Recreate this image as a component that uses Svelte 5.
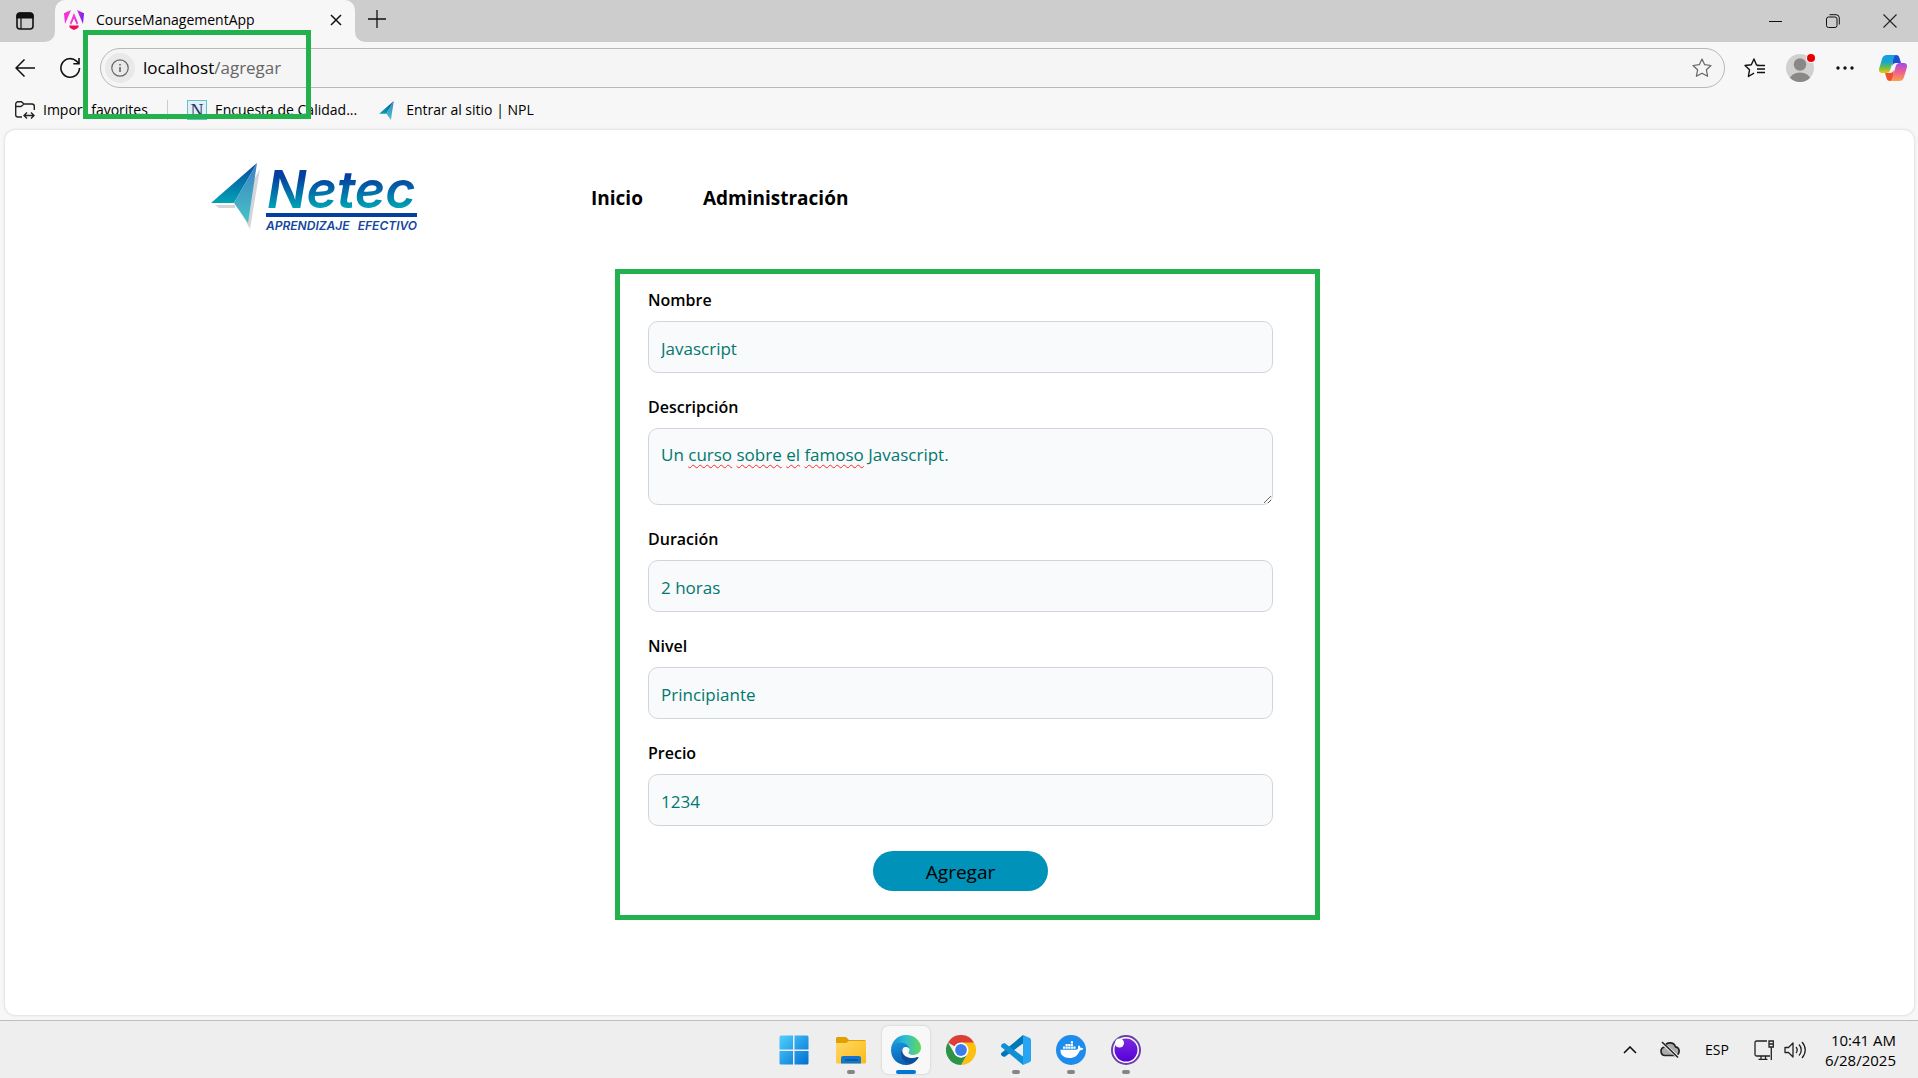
<script lang="ts">
  let nombre = $state('Javascript');
  let descripcion = $state('Un curso sobre el famoso Javascript.');
  let duracion = $state('2 horas');
  let nivel = $state('Principiante');
  let precio = $state('1234');
  const flagged = ['curso', 'sobre', 'el', 'famoso'];
  let words = $derived(descripcion.split(' '));
</script>

{#snippet plane(id: string)}
  <linearGradient id="{id}a" x1="0" y1="0" x2="0" y2="1">
    <stop offset="0" stop-color="#0a47a0" /><stop offset="1" stop-color="#00a3b4" />
  </linearGradient>
  <linearGradient id="{id}b" x1="0" y1="0" x2="0" y2="1">
    <stop offset="0" stop-color="#3f7fc0" /><stop offset="1" stop-color="#45c4c8" />
  </linearGradient>
  <path d="M46 0 0 40h23z" fill="url(#{id}a)" />
  <path d="M46 0 23 40l14 20z" fill="url(#{id}b)" />
{/snippet}

<div class="screen">
  <header class="browser">
    <div class="tabs">
      <div class="tabs-start">
        <button class="plain" aria-label="Tab actions">
          <svg width="20" height="20" viewBox="0 0 20 20"><rect x="2" y="2" width="16" height="16" rx="3" fill="none" stroke="#111" stroke-width="1.6" /><path d="M2 5a3 3 0 0 1 3-3h10a3 3 0 0 1 3 3v2H2zM6 7v11" fill="#111" stroke="#111" stroke-width="1.2" /></svg>
        </button>
      </div>
      <div class="tab-cell">
        <div class="tab">
          <svg class="favicon" width="20" height="20" viewBox="0 0 20 20">
            <defs><linearGradient id="ng"><stop offset="0" stop-color="#f52bd0" /><stop offset=".5" stop-color="#f63bd2" /><stop offset="1" stop-color="#7618f5" /></linearGradient></defs>
            <path d="M7 0 0 3.3 1 14zM13 0l7 3.3L19 14zM10 3 6 13l1 2 3-6.500 3 6.500 1-2z" fill="url(#ng)" />
            <path d="M5 15.500h10l-1 2.500-4 2-4-2z" fill="#f20b5d" />
          </svg>
          <span class="tab-title">CourseManagementApp</span>
          <button class="plain" aria-label="Close tab"><svg width="12" height="12" viewBox="0 0 12 12"><path d="m1 1 10 10M11 1 1 11" stroke="#111" stroke-width="1.500" /></svg></button>
        </div>
      </div>
      <div class="tabs-rest">
        <button class="plain new-tab" aria-label="New tab"><svg width="18" height="18" viewBox="0 0 18 18"><path d="M9 0v18M0 9h18" stroke="#111" stroke-width="1.300" /></svg></button>
        <div class="window-controls">
          <button class="plain" aria-label="Minimize"><svg width="13" height="13" viewBox="0 0 13 13"><path d="M0 6.500h13" stroke="#111" /></svg></button>
          <button class="plain" aria-label="Restore"><svg width="14" height="14" viewBox="0 0 14 14" fill="none" stroke="#111"><rect x=".5" y="3" width="10.500" height="10.500" rx="2" /><path d="M3.500.7H10a3.300 3.300 0 0 1 3.300 3.300v6.500" /></svg></button>
          <button class="plain" aria-label="Close"><svg width="14" height="14" viewBox="0 0 14 14"><path d="m.5.5 13 13M13.500.5l-13 13" stroke="#222" stroke-width="1.100" /></svg></button>
        </div>
      </div>
    </div>

    <div class="toolbar">
      <button class="plain back" aria-label="Back"><svg width="20" height="18" viewBox="0 0 20 18" fill="none" stroke="#111" stroke-width="1.500"><path d="M20 9H1M9.500.5 1 9l8.500 8.500" /></svg></button>
      <button class="plain reload" aria-label="Refresh"><svg width="22" height="22" viewBox="0 0 22 22" fill="none" stroke="#111" stroke-width="1.600"><path d="M20.500 11a9.300 9.300 0 1 1-3-6.900L20 6.500" /><path d="M20 1v5.700h-5.700" /></svg></button>
      <div class="address">
        <button class="plain info" aria-label="Site information"><svg width="18" height="18" viewBox="0 0 18 18" fill="none" stroke="#666" stroke-width="1.200"><circle cx="9" cy="9" r="8.200" /><path d="M9 8v5M9 5v1.500" stroke-width="1.600" /></svg></button>
        <span class="url">localhost<span>/agregar</span></span>
        <button class="plain" aria-label="Add to favorites"><svg width="20" height="20" viewBox="0 0 20 20"><path d="m10 1 2.700 5.700 6.300.8-4.600 4.300 1.200 6.400L10 15.200l-5.600 3 1.200-6.400L1 7.500l6.300-.8z" fill="none" stroke="#666" stroke-width="1.200" stroke-linejoin="round" /></svg></button>
      </div>
      <button class="plain tool" aria-label="Favorites"><svg width="21" height="20" viewBox="0 0 21 20" fill="none" stroke="#111" stroke-width="1.400" stroke-linejoin="round"><path d="M15.500 7.500 12.500 7 10 1 7.300 6.700 1 7.500l4.500 4.300-1.100 6.700 5.600-3.300M13 7.500h8M13 11h8M13 14.500h8" /></svg></button>
      <button class="plain tool" aria-label="Profile"><svg width="30" height="30" viewBox="0 0 30 30"><defs><clipPath id="pc"><circle cx="15" cy="15" r="14" /></clipPath></defs><circle cx="15" cy="15" r="14" fill="#d2d0ce" /><g clip-path="url(#pc)" fill="#8a8886"><circle cx="15" cy="11.500" r="6.200" /><ellipse cx="15" cy="26" rx="10" ry="6.500" /></g><circle cx="26" cy="5" r="5" fill="#f7f7f7" /><circle cx="26" cy="5" r="4" fill="#e60000" /></svg></button>
      <button class="plain tool" aria-label="Settings and more"><svg width="18" height="4" viewBox="0 0 18 4" fill="#111"><circle cx="2" cy="2" r="1.700" /><circle cx="9" cy="2" r="1.700" /><circle cx="16" cy="2" r="1.700" /></svg></button>
      <button class="plain copilot" aria-label="Copilot">
        <svg width="28" height="26" viewBox="0 0 28 26">
          <defs>
            <linearGradient id="c1" x1="0" y1="0" x2="0" y2="1"><stop offset="0" stop-color="#149bf0" /><stop offset=".4" stop-color="#1aa7c8" /><stop offset=".7" stop-color="#6bbf4b" /><stop offset="1" stop-color="#f5c400" /></linearGradient>
            <linearGradient id="c2" x1="0" y1="0" x2="0" y2="1"><stop offset="0" stop-color="#a24be8" /><stop offset=".5" stop-color="#ee5f93" /><stop offset="1" stop-color="#ff9f4a" /></linearGradient>
          </defs>
          <path d="M13 0h4c2 0 3 1 3.500 3L22 8h-5c-2 0-3 1-3.500 3z" fill="#1c4fd0" />
          <path d="M15 26h-4c-2 0-3-1-3.500-3L6 18h5c2 0 3-1 3.500-3z" fill="#f0502c" />
          <path d="M8 0h10c-2 0-2.800 1.500-3.500 4l-3 10c-.8 3-2 4-4.500 4H3c-3 0-3.500-2.500-2.700-5L3 4C4 1 5.500 0 8 0z" fill="url(#c1)" />
          <path d="M20 26H10c2 0 2.800-1.500 3.500-4l3-10c.8-3 2-4 4.500-4h4c3 0 3.500 2.500 2.700 5L25 22c-1 3-2.500 4-5 4z" fill="url(#c2)" />
        </svg>
      </button>
    </div>

    <nav class="bookmarks" aria-label="Favorites bar">
      <a href="#import"><svg width="20" height="20" viewBox="0 0 20 20" fill="none" stroke="#222" stroke-width="1.400"><path d="M7 17H3a2.300 2.300 0 0 1-2.300-2.300V4A2.300 2.300 0 0 1 3 1.700h3.500L9 4h8a2.300 2.300 0 0 1 2.300 2.300V10M1 6.500h5L9 4M9 15.500h10M12 12.500l-3 3 3 3M16 12.500l3 3-3 3" /></svg>Import favorites</a>
      <span class="divider"></span>
      <a href="#encuesta"><span class="n-icon">N</span>Encuesta de Calidad...</a>
      <a href="#npl" class="npl"><svg width="15" height="19" viewBox="0 0 46 60">{@render plane('s')}</svg>Entrar al sitio | NPL</a>
    </nav>
    <div class="mark url-mark"></div>
  </header>

  <main class="page">
    <div class="site-header">
      <a href="#inicio" class="brand" aria-label="Netec">
        <svg width="210" height="82" viewBox="0 -10 210 82">
          <defs><linearGradient id="nt" x1="0" y1="0" x2="0" y2="1"><stop offset=".3" stop-color="#053fa0" /><stop offset=".8" stop-color="#00a5b5" /></linearGradient></defs>
          <g fill="#d3d5d8"><path d="M49 6 27 44l12 22zM4 42h20v3H8z" /></g>
          {@render plane('l')}
          <text x="56" y="45" class="wordmark" fill="url(#nt)">Netec</text>
          <rect x="55" y="50" width="151" height="4" fill="#053fa0" />
          <text x="55" y="67" class="tagline">APRENDIZAJE</text>
          <text x="206" y="67" class="tagline" text-anchor="end">EFECTIVO</text>
        </svg>
      </a>
      <nav class="site-nav" aria-label="Principal"><a href="#inicio">Inicio</a><a href="#admin">Administración</a></nav>
    </div>

    <form class="course" onsubmit={(e) => e.preventDefault()}>
      <div class="field"><label for="nombre">Nombre</label><input id="nombre" bind:value={nombre} /></div>
      <div class="field">
        <label for="descripcion">Descripción</label>
        <div class="area">
          <textarea id="descripcion" rows="2" spellcheck="false" bind:value={descripcion}></textarea>
          <div class="spelling" aria-hidden="true">{#each words as word, i}{i ? ' ' : ''}<span class:wrong={flagged.includes(word)}>{word}</span>{/each}</div>
        </div>
      </div>
      <div class="field"><label for="duracion">Duración</label><input id="duracion" bind:value={duracion} /></div>
      <div class="field"><label for="nivel">Nivel</label><input id="nivel" bind:value={nivel} /></div>
      <div class="field"><label for="precio">Precio</label><input id="precio" bind:value={precio} /></div>
      <button class="submit" type="submit">Agregar</button>
      <div class="mark form-mark"></div>
    </form>
  </main>

  <footer class="taskbar">
    <div></div>
    <div class="apps">
      <button class="app start" aria-label="Start">
        <svg width="30" height="30" viewBox="0 0 30 30"><defs><linearGradient id="w" x1="0" y1="0" x2="1" y2="1"><stop offset="0" stop-color="#4fd0ff" /><stop offset="1" stop-color="#006fd0" /></linearGradient></defs><path d="M2 .5h12v14H.5V2A1.500 1.500 0 0 1 2 .5zM15.500.5H28A1.500 1.500 0 0 1 29.500 2v12.500h-14zM.5 16H14v13.500H2A1.500 1.500 0 0 1 .5 28zM15.500 16h14v12a1.500 1.500 0 0 1-1.500 1.500H15.500z" fill="url(#w)" /></svg>
      </button>
      <button class="app open" aria-label="File Explorer">
        <svg width="30" height="30" viewBox="0 0 30 30"><defs><linearGradient id="f" x1="0" y1="0" x2="1" y2="1"><stop offset="0" stop-color="#ffd967" /><stop offset="1" stop-color="#fcb917" /></linearGradient></defs><path d="M0 3.500A1.500 1.500 0 0 1 1.500 2H10l3 3h15.500A1.500 1.500 0 0 1 30 6.500V12H0z" fill="#dfa000" /><path d="M0 8h10l3-2h17v21a1.500 1.500 0 0 1-1.500 1.500h-27A1.500 1.500 0 0 1 0 27z" fill="url(#f)" /><path d="M5 28.500V23a2 2 0 0 1 2-2h16a2 2 0 0 1 2 2v5.500z" fill="#1277cc" /><path d="M9 25h13" stroke="#06498c" stroke-width="1.200" /></svg>
      </button>
      <button class="app open active" aria-label="Microsoft Edge">
        <svg width="30" height="30" viewBox="0 0 30 30">
          <defs>
            <linearGradient id="e1"><stop offset="0" stop-color="#158bd3" /><stop offset=".45" stop-color="#2bbcd5" /><stop offset="1" stop-color="#63d957" /></linearGradient>
            <linearGradient id="e2" x1="0" y1="0" x2=".3" y2="1"><stop offset="0" stop-color="#1896df" /><stop offset="1" stop-color="#0a61b5" /></linearGradient>
          </defs>
          <path d="M0 14C.8 6 7 0 15 0c9 0 15 6.500 15 12.500 0 4.700-3.600 7.500-7.800 7.500-3 0-4.700-1-4.700-2.200 0-.8 1-1.300 1-3.300 0-2.500-2.700-5.500-7.500-5.500C5.500 9 1.500 11.500 0 14z" fill="url(#e1)" />
          <path d="M0 15c.3-4.500 4.500-7.500 9-7.500 5.500 0 9 3.300 9.500 6.500-1-1.700-2.800-2.300-4.500-2-4 1-5 6-3 10 1.800 4 5.500 6.500 9 7-1.500.7-3.500 1-5 1C6.500 30 0 23.500 0 15z" fill="url(#e2)" />
          <path d="M12.500 12.500C8 15.500 9 27 19.500 29.300c3.700-1.300 6-3.300 7.900-6.300.4-.7-.2-1.300-1-1-7 3-15.400-.7-15.100-6.500.1-1.200.5-2.200 1.200-3z" fill="#0e4d98" />
        </svg>
      </button>
      <button class="app" aria-label="Google Chrome">
        <svg width="30" height="30" viewBox="0 0 30 30"><path d="M15 15 2 7.500A15 15 0 0 1 28 7.500z" fill="#dc3f34" /><path d="M15 7.500h13A15 15 0 0 1 15 30l6.500-11.300z" fill="#fdc010" /><path d="M2 7.500 8.500 18.700c1.500 2.500 4 3.800 6.500 3.800 2 0 4.500-1 6-3L15 30A15 15 0 0 1 2 7.500z" fill="#2b9447" /><circle cx="15" cy="15" r="7.500" fill="#fff" /><circle cx="15" cy="15" r="5.900" fill="#3b7ded" /></svg>
      </button>
      <button class="app open" aria-label="Visual Studio Code">
        <svg width="30" height="30" viewBox="0 0 30 30"><path d="M22 0v8.500L3.500 22 1 21l-1-1.500v-1.300z" fill="#0077b9" /><path d="M22 30v-8.500L3.500 8 1 9l-1 1.500v1.300z" fill="#118fd6" /><path d="m22 0 7 3 1 1.500v21L29 27l-7 3z" fill="#27a5f2" /></svg>
      </button>
      <button class="app open" aria-label="Docker">
        <svg width="30" height="30" viewBox="0 0 30 30"><circle cx="15" cy="15" r="15" fill="#1d8ced" /><path d="M4.500 14.800H20c1.500 0 2.200-.7 2-2.200 0-1 .3-1.800.8-2.300 1 .6 1.500 1.500 1.500 2.400 1-.2 2.200 0 3 .6-.5 1.500-1.800 2.200-3.500 2.200C22 20.500 18.500 23 13.500 23 8 23 4 20 4.500 14.800z" fill="#fff" /><path d="M7 12.700h12.500M9.500 10h7.500M14.800 7.300h2.400" stroke="#fff" stroke-width="2.200" stroke-dasharray="2.200 .4" /></svg>
      </button>
      <button class="app open" aria-label="Insomnia">
        <svg width="30" height="30" viewBox="0 0 30 30"><defs><linearGradient id="i" x1="0" y1="0" x2="0" y2="1"><stop offset="0" stop-color="#7a28e0" /><stop offset="1" stop-color="#5500d8" /></linearGradient></defs><circle cx="15" cy="15" r="14" fill="#fff" stroke="#6940a5" stroke-width="2" /><circle cx="15" cy="15" r="11.500" fill="url(#i)" /><circle cx="8.500" cy="8" r="4.500" fill="#fff" /></svg>
      </button>
    </div>
    <div class="tray">
      <button class="plain" aria-label="Show hidden icons"><svg width="14" height="8" viewBox="0 0 14 8"><path d="m1 7 6-6 6 6" fill="none" stroke="#111" stroke-width="1.600" /></svg></button>
      <button class="plain cloud" aria-label="OneDrive"><svg width="20" height="18" viewBox="0 0 20 18"><path d="M5 14.500a4.300 4.300 0 0 1-.5-8.500 5.800 5.800 0 0 1 11-.2 4.400 4.400 0 0 1-.3 8.700z" fill="#aaa" stroke="#222" stroke-width="1.700" /><path d="m2 2 16 14" stroke="#eee" stroke-width="3" /><path d="m2 1 16 15.500" stroke="#222" stroke-width="1.600" /></svg></button>
      <button class="plain lang">ESP</button>
      <button class="plain system" aria-label="Network and volume">
        <svg width="20" height="20" viewBox="0 0 20 20" fill="none" stroke="#222" stroke-width="1.300"><path d="M13 1H2.500A1.500 1.500 0 0 0 1 2.500v12A1.500 1.500 0 0 0 2.500 16H16M4.500 19.300h9M7 16v3M11.500 16v3M15 1h4.300v6H15zM15 4h4M17.300 7v13" /></svg>
        <svg width="22" height="18" viewBox="0 0 22 18" fill="none" stroke="#222" stroke-width="1.300" stroke-linejoin="round"><path d="M1 6.500h3.500L9 2v14l-4.500-4.500H1zM12 6c1.500 1.800 1.500 4.200 0 6M15 3.500c3 3.200 3 7.800 0 11M18 1c4.300 4.700 4.300 11.300 0 16" /></svg>
      </button>
      <div class="clock"><time>10:41 AM</time><time>6/28/2025</time></div>
    </div>
  </footer>
</div>

<style>
  :global(body) { margin: 0; }
  * { box-sizing: border-box; }
  .screen {
    min-height: 100vh;
    display: flex;
    flex-direction: column;
    background: #f7f7f7;
    color: #000;
    font-family: "Open Sans", "Noto Sans", sans-serif;
    font-size: 14px;
  }
  a { color: inherit; text-decoration: none; }
  button, input, textarea { font: inherit; color: inherit; }
  .plain {
    border: 0;
    padding: 0;
    background: none;
    display: flex;
    align-items: center;
    justify-content: center;
  }
  .browser { position: relative; }

  .tabs { display: flex; height: 42px; }
  .tabs-start, .tabs-rest { background: #cdcdcd; display: flex; align-items: center; }
  .tabs-start { width: 55px; justify-content: center; padding-right: 5px; border-bottom-right-radius: 10px; }
  .tab-cell { width: 300px; background: linear-gradient(#cdcdcd 50%, #f7f7f7 50%); }
  .tab {
    height: 42px;
    display: flex;
    align-items: center;
    padding: 0 13px 3px 9px;
    background: #f7f7f7;
    border-radius: 10px 10px 0 0;
  }
  .tab-title { flex: 1; margin-left: 12px; }
  .tabs-rest { flex: 1; padding-left: 13px; border-bottom-left-radius: 10px; justify-content: space-between; }
  .new-tab { padding-bottom: 4px; }
  .window-controls { display: flex; }
  .window-controls button { width: 57px; height: 42px; }

  .toolbar { display: flex; align-items: center; height: 52px; }
  .back { width: 50px; }
  .reload { width: 40px; margin-right: 10px; }
  .address {
    flex: 1;
    height: 40px;
    display: flex;
    align-items: center;
    padding: 0 12px 0 4px;
    margin-right: 7px;
    border: 1px solid #b8b8b8;
    border-radius: 20px;
    background: #f5f5f5;
  }
  .info { width: 30px; height: 30px; border-radius: 50%; background: #e9e9e9; }
  .url { flex: 1; margin-left: 8px; padding-bottom: 2px; font-size: 17px; }
  .url span { color: #666; }
  .tool { width: 45px; }
  .copilot { width: 51px; }

  .bookmarks { display: flex; align-items: center; height: 36px; padding: 0 15px 4px; }
  .bookmarks a { display: flex; align-items: center; gap: 8px; line-height: 18px; }
  .divider { width: 1px; height: 20px; background: #ccc; margin: 0 19px; }
  .n-icon {
    width: 20px;
    height: 20px;
    border: 1px solid #5fc3cf;
    background: #e2eff4;
    color: #25316f;
    font: 18px/20px "Liberation Serif", serif;
    text-align: center;
  }
  .bookmarks .npl { margin-left: 22px; gap: 12px; }

  .mark { position: absolute; border: 5px solid #22b14c; pointer-events: none; }
  .url-mark { left: 83px; top: 30px; width: 228px; height: 89px; }
  .form-mark { inset: -18px -47px -29px -33px; }

  .page {
    flex: 1;
    margin: 0 4px 5px 5px;
    padding-left: 2px;
    border-radius: 10px;
    background: #fff;
    box-shadow: 0 0 3px #c8c8c8;
  }
  .site-header {
    display: flex;
    align-items: center;
    gap: 170px;
    padding: 23px 204px 0;
  }
  .brand { display: flex; }
  .wordmark { font: italic 600 52px Inter, sans-serif; }
  .tagline { font: italic 600 12px Inter, sans-serif; fill: #1546a0; }
  .site-nav { display: flex; gap: 60px; font-size: 19px; font-weight: 700; padding-top: 7px; }

  .course {
    position: relative;
    max-width: 625px;
    margin: 52px auto 0;
    display: flex;
    flex-direction: column;
    gap: 21px;
  }
  .field { display: flex; flex-direction: column; gap: 8px; }
  label { font-size: 16px; line-height: 26px; font-weight: 600; }
  input, textarea {
    display: block;
    width: 100%;
    padding: 12px;
    border: 1px solid #d1d5db;
    border-radius: 10px;
    background: #f9fafb;
    color: #00786f;
    font-size: 17px;
    line-height: 26px;
  }
  input { height: 52px; padding: 14px 12px 12px; }
  textarea { height: 77px; padding-top: 13px; resize: both; overflow: hidden; outline: none; }
  .area { position: relative; }
  .spelling {
    position: absolute;
    inset: 0;
    padding: 14px 13px;
    pointer-events: none;
    color: transparent;
    font-size: 17px;
    line-height: 26px;
  }
  .wrong { text-decoration: underline wavy 1px #ff2a2a; text-decoration-skip-ink: none; text-underline-offset: 3px; }
  .submit {
    align-self: center;
    width: 175px;
    height: 40px;
    margin-top: 4px;
    padding: 2px 0 0;
    border: 0;
    border-radius: 20px;
    background: #0092b8;
    font-size: 19px;
  }

  .taskbar {
    display: grid;
    grid-template-columns: 1fr auto 1fr;
    align-items: center;
    height: 58px;
    border-top: 1px solid #bdbdbd;
    background: #eee;
  }
  .apps { display: flex; gap: 7px; padding-left: 2px; }
  .app {
    position: relative;
    width: 48px;
    height: 48px;
    padding: 0;
    border: 0;
    border-radius: 6px;
    background: none;
    display: grid;
    place-items: center;
  }
  .start { margin-right: 2px; }
  .active { background: #f8f8f8; box-shadow: 0 0 2px #bbb; }
  .open::after {
    content: "";
    position: absolute;
    bottom: 0;
    left: 20px;
    width: 8px;
    height: 4px;
    border-radius: 2px;
    background: #858585;
  }
  .active::after { left: 14px; width: 20px; background: #0078d4; }
  .tray { display: flex; align-items: center; justify-content: flex-end; padding-right: 22px; }
  .cloud { margin-left: 23px; }
  .lang { margin-left: 25px; }
  .system { margin: 0 19px 0 25px; gap: 10px; }
  .clock { display: flex; flex-direction: column; align-items: flex-end; font-size: 15px; line-height: 20px; }
</style>
